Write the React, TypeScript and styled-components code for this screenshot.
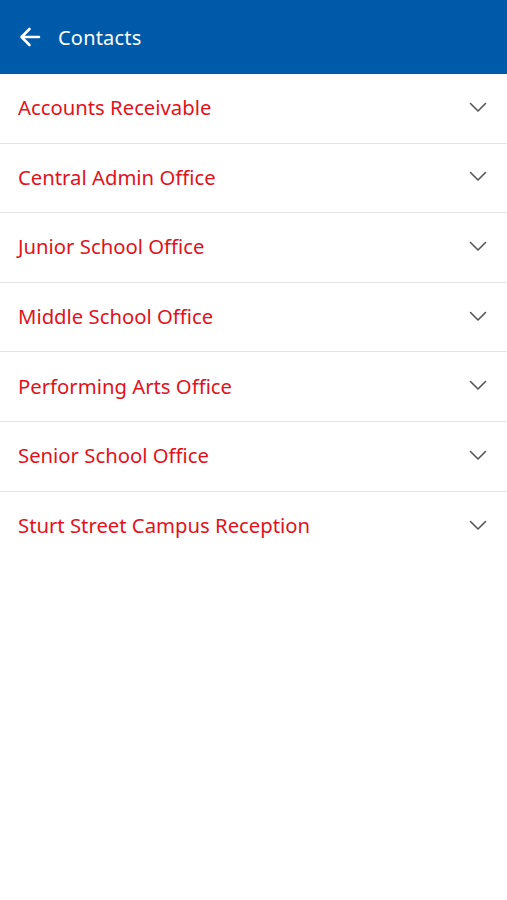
import React from "react";
import styled, { createGlobalStyle } from "styled-components";

const Global = createGlobalStyle`
  html, body { margin: 0; padding: 0; background: #ffffff; }
  body { font-family: "Noto Sans", "Open Sans", sans-serif; }
`;

const Page = styled.div`
  width: 507px;
  min-height: 900px;
  background: #ffffff;
`;

const Header = styled.header`
  height: 74px;
  background: #005aaa;
  display: flex;
  align-items: center;
  padding-left: 18px;
  gap: 16px;
  box-sizing: border-box;
`;

const Title = styled.h1`
  margin: 0;
  color: #ffffff;
  font-size: 20px;
  font-weight: 400;
  letter-spacing: 0.2px;
`;

const List = styled.ul`
  list-style: none;
  margin: 0;
  padding: 0;
`;

const Row = styled.li<{ $last?: boolean }>`
  height: 69.6px;
  display: flex;
  align-items: center;
  justify-content: space-between;
  padding: 0 20px 2px 18px;
  border-bottom: ${(p) => (p.$last ? "none" : "1.5px solid #e4e4e4")};
  box-sizing: border-box;
`;

const Label = styled.span`
  color: #e2111b;
  font-size: 20.3px;
  font-weight: 400;
`;

const BackIcon = () => (
  <svg width="24" height="24" viewBox="0 0 24 24" fill="none" stroke="#fff" strokeWidth="2.6" strokeLinecap="round" strokeLinejoin="round">
    <path d="M21 12H3.5M11.5 4L3.5 12l8 8" />
  </svg>
);

const Chevron = () => (
  <svg width="18" height="11" viewBox="0 0 18 11" fill="none" stroke="#555" strokeWidth="1.6" strokeLinecap="round" strokeLinejoin="round">
    <path d="M1.5 1.5L9 9l7.5-7.5" />
  </svg>
);

const items = [
  "Accounts Receivable",
  "Central Admin Office",
  "Junior School Office",
  "Middle School Office",
  "Performing Arts Office",
  "Senior School Office",
  "Sturt Street Campus Reception",
];

export default function App() {
  return (
    <Page>
      <Global />
      <Header>
        <BackIcon />
        <Title>Contacts</Title>
      </Header>
      <List>
        {items.map((t, i) => (
          <Row key={t} $last={i === items.length - 1}>
            <Label>{t}</Label>
            <Chevron />
          </Row>
        ))}
      </List>
    </Page>
  );
}
